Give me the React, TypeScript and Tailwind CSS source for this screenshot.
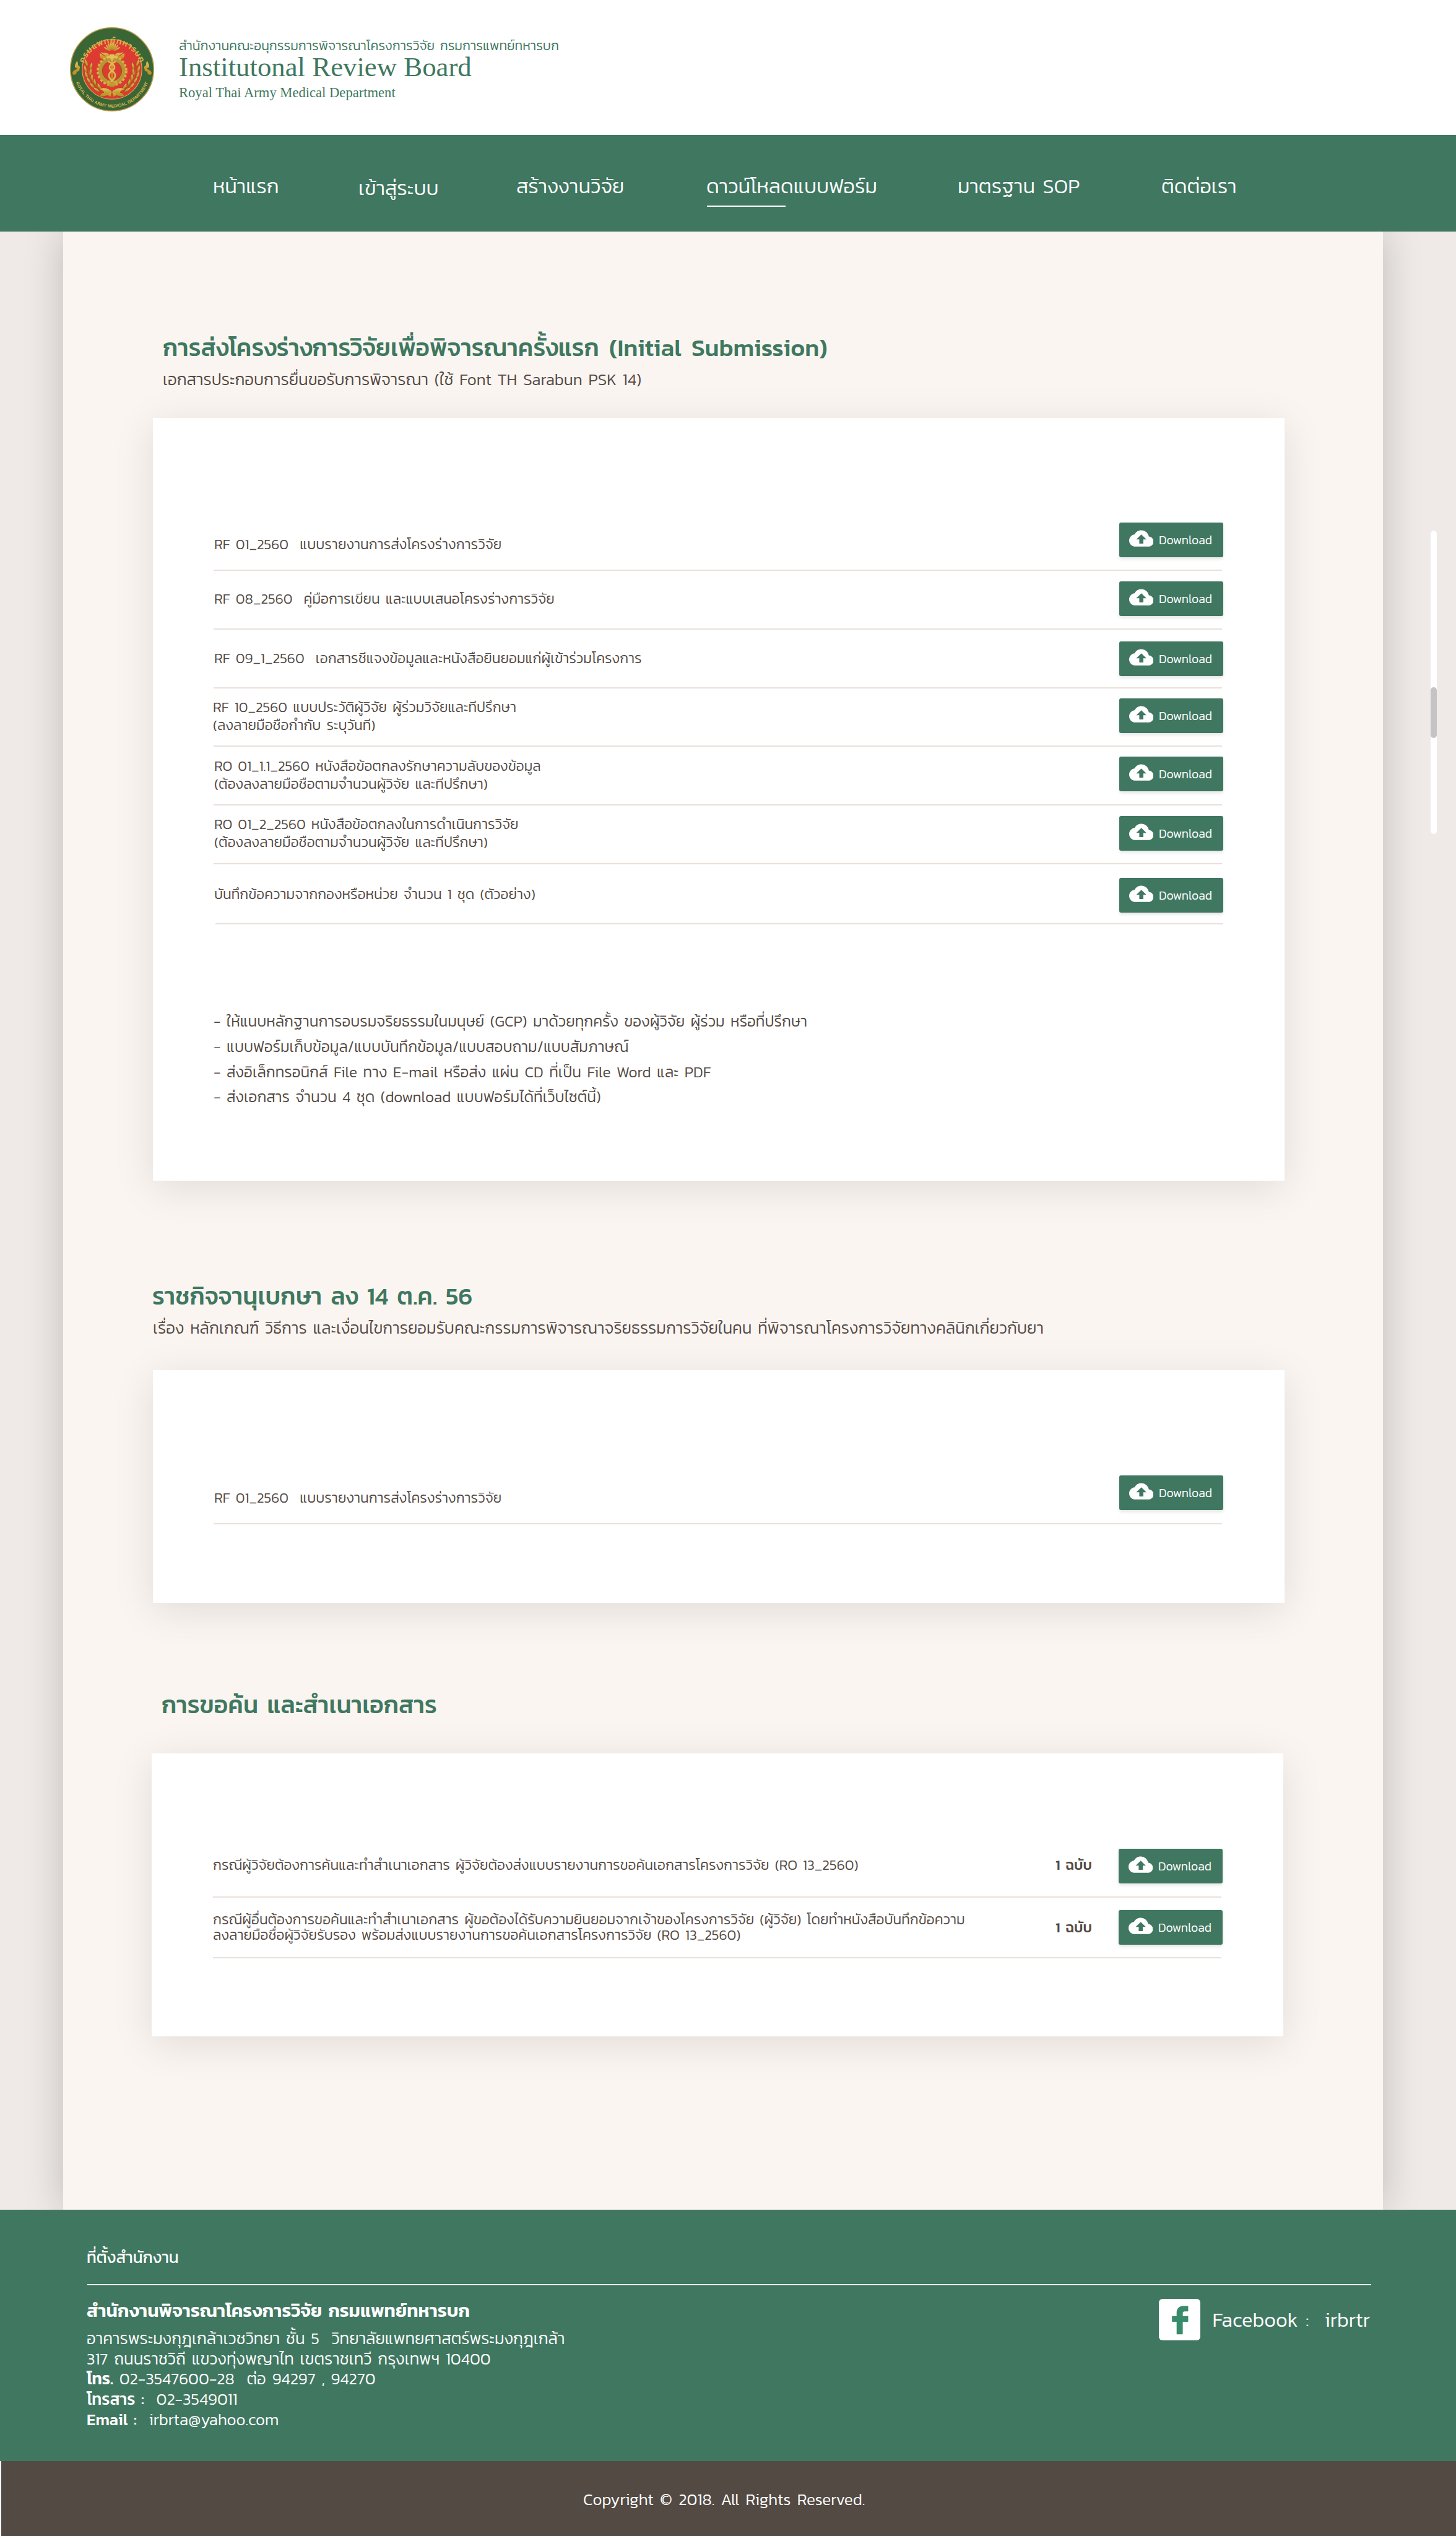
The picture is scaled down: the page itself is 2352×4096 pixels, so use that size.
import type { ReactNode } from "react";

type Row = {
  lines: string[];
  row: string;
  text: string;
  button: string;
  copies?: string;
};

function Seal() {
  const leaves = [
    [33, 72, -18], [31, 84, -14], [33, 96, -20], [38, 107, -30], [45, 117, -42], [54, 125, -55],
    [42, 78, 16], [41, 90, 10], [44, 101, 0], [50, 111, -14], [59, 119, -30],
  ];
  return (
    <svg viewBox="0 0 168 168" className="size-[136px] shrink-0">
      <defs>
        <path id="arcTop" d="M 26.5 75 A 59 59 0 0 1 141.5 75" transform="translate(0 3)" />
        <path id="arcBottom" d="M 8.5 96 A 76.5 76.5 0 0 0 159.5 96" />
        <linearGradient id="gold" x1="0" y1="0" x2="0" y2="1">
          <stop offset="0" stopColor="#e8c860" />
          <stop offset="0.5" stopColor="#c99f35" />
          <stop offset="1" stopColor="#b98a28" />
        </linearGradient>
      </defs>
      <circle cx="84" cy="84" r="83" fill="#3a6636" stroke="#b79a45" strokeWidth="2" />
      <circle cx="84" cy="84" r="59.5" fill="#dd3a31" stroke="#c9b25a" strokeWidth="1.4" />
      <text fill="#d8b44a" fontFamily="Kanit, sans-serif" fontWeight="500" fontSize="17" letterSpacing="1.2">
        <textPath href="#arcTop" startOffset="50%" textAnchor="middle">กรมแพทย์ทหารบก</textPath>
      </text>
      <text fill="#d8b44a" fontFamily="Liberation Sans, sans-serif" fontWeight="700" fontSize="8.6" className="[word-spacing:1px]">
        <textPath href="#arcBottom" startOffset="50%" textAnchor="middle">ROYAL THAI ARMY MEDICAL DEPARTMENT</textPath>
      </text>
      {[0, 1].map((side) => (
        <g key={side} transform={side ? "translate(168 0) scale(-1 1)" : undefined}>
          <path d="M14 67c-2 5-5 8-4 12 1 3 5 4 7 2-4 4-11 5-12 10 0 4 4 5 6 3 3-1 3-4 1-5 3-1 7 0 7-5 2-4 0-8-3-8 0-3 0-6-2-9z" fill="url(#gold)" />
          {leaves.map(([x, y, r]) => (
            <path key={`${x}-${y}`} d="M0 7C-4 2-3-4 0-9C3-4 4 2 0 7z" transform={`translate(${x} ${y}) rotate(${r})`} fill="url(#gold)" stroke="#8f3a1c" strokeWidth="0.6" />
          ))}
          <path d="M37 86C39 106 54 124 80 131" fill="none" stroke="#a5761f" strokeWidth="1.6" />
          <path d="M84 128c-8-8-20-9-27-4 5 0 9 2 11 6-4 1-8 4-9 8 8 1 17-1 25-6z" fill="url(#gold)" stroke="#8f3a1c" strokeWidth="0.6" />
          <path d="M82 62c-6 2-9-1-12-5-2-3-7-3-8-8 4 4 8 1 12 3 3 1 5 4 8 4zM60 52c-2 5 0 9 4 11l8 3 4-5-8-4z" fill="url(#gold)" />
          <path d="M82 138c-3 0-6-1-7-4l7-4z" fill="url(#gold)" />
        </g>
      ))}
      {[-60, -42, -26, -12, 0, 12, 26, 42, 60].map((r) => (
        <path key={r} d="M0-3C-2.6-10-2-15 0-19C2-15 2.6-10 0-3z" transform={`translate(84 49) rotate(${r})`} fill="url(#gold)" />
      ))}
      <circle cx="84" cy="87" r="23.5" fill="none" stroke="#bd9434" strokeWidth="9" />
      <circle cx="84" cy="87" r="28.5" fill="none" stroke="#d6b148" strokeWidth="4.5" strokeDasharray="5 3.2" />
      <circle cx="84" cy="87" r="19.5" fill="none" stroke="#7d5516" strokeWidth="1.2" />
      <path d="M80 54h8l-1.5 12h-5zM82.5 66h3v48h-3z" fill="url(#gold)" />
      <path d="M76 68c12 6 18 12 8 19s-7 14 2 22M92 68c-12 6-18 12-8 19s7 14-2 22" fill="none" stroke="#dcb84f" strokeWidth="3.4" />
      <path d="M73 58h22v4H73z" fill="#e3c25a" />
      <path d="M76 106l8 9 8-9 2 6-6 7h-8l-6-7z" fill="url(#gold)" />
    </svg>
  );
}

function CloudUpload() {
  return (
    <svg viewBox="0 0 24 24" className="size-[39.4px] shrink-0 fill-white">
      <path d="M19.35 10.04C18.67 6.59 15.64 4 12 4 9.11 4 6.6 5.64 5.35 8.04 2.34 8.36 0 10.91 0 14c0 3.31 2.69 6 6 6h13c2.76 0 5-2.24 5-5 0-2.64-2.05-4.78-4.65-4.96zM14 13v4h-4v-4H7l5-5 5 5h-3z" />
    </svg>
  );
}

function DownloadButton({ className }: { className: string }) {
  return (
    <button
      className={`-mr-[2px] flex h-[55.5px] w-[168px] shrink-0 items-start rounded-[3px] bg-[#407761] pl-[16px] pt-[6px] text-[19.6px] font-light leading-[30px] text-white shadow-[0_3px_5px_rgba(0,0,0,0.1)] ${className}`}
    >
      <CloudUpload />
      <span className="ml-[8.5px] mt-[6.5px]">Download</span>
    </button>
  );
}

function FileRow({ item }: { item: Row }) {
  return (
    <div className={`flex items-start justify-between border-b-2 border-[#eae0d9] ${item.row}`}>
      <div className={`whitespace-pre ${item.text}`}>
        {item.lines.map((line) => (
          <div key={line}>{line}</div>
        ))}
      </div>
      <div className="flex items-start">
        {item.copies && <span className={`mr-[43px] whitespace-pre font-medium ${item.copies}`}>1 ฉบับ</span>}
        <DownloadButton className={item.button} />
      </div>
    </div>
  );
}

function Card({ className, children }: { className: string; children: ReactNode }) {
  return (
    <div className={`bg-white text-[22.87px] font-light leading-[29.4px] shadow-[0_12px_62px_rgba(0,0,0,0.1)] ${className}`}>
      <div className="w-[1629px]">{children}</div>
    </div>
  );
}

function Title({ className, children }: { className: string; children: ReactNode }) {
  return <h2 className={`whitespace-pre text-[39.2px] font-medium leading-[56px] text-[#3f7860] ${className}`}>{children}</h2>;
}

function Subtitle({ className, children }: { className: string; children: ReactNode }) {
  return <p className={`whitespace-pre text-[26.13px] font-light leading-[36px] ${className}`}>{children}</p>;
}

const initialFiles: Row[] = [
  { lines: ["RF 01_2560  แบบรายงานการส่งโครงร่างการวิจัย"], row: "h-[247px]", text: "ml-px pt-[190px]", button: "mt-[169px]" },
  { lines: ["RF 08_2560  คู่มือการเขียน และแบบเสนอโครงร่างการวิจัย"], row: "h-[95px]", text: "ml-px pt-[31px]", button: "mt-[17px]" },
  { lines: ["RF 09_1_2560  เอกสารชีแจงข้อมูลและหนังสือยินยอมแก่ผู้เข้าร่วมโครงการ"], row: "h-[95px]", text: "ml-px pt-[32px]", button: "mt-[19px]" },
  { lines: ["RF 10_2560 แบบประวัติผู้วิจัย ผู้ร่วมวิจัยและทีปรึกษา", "(ลงลายมือชือกำกับ ระบุวันที)"], row: "h-[94px]", text: "-ml-px pt-[16px]", button: "mt-[16px]" },
  { lines: ["RO 01_1.1_2560 หนังสือข้อตกลงรักษาความลับของข้อมูล", "(ต้องลงลายมือชือตามจำนวนผู้วิจัย และทีปรึกษา)"], row: "h-[95px]", text: "ml-px pt-[17px]", button: "mt-[16px]" },
  { lines: ["RO 01_2_2560 หนังสือข้อตกลงในการดำเนินการวิจัย", "(ต้องลงลายมือชือตามจำนวนผู้วิจัย และทีปรึกษา)"], row: "h-[95px]", text: "ml-px pt-[16px]", button: "mt-[17px]" },
  { lines: ["บันทึกข้อความจากกองหรือหน่วย จำนวน 1 ชุด (ตัวอย่าง)"], row: "ml-[3px] -mr-[2px] h-[97px]", text: "-ml-[2px] pt-[34px]", button: "mt-[22px] mr-0!" },
];

const gazetteFiles: Row[] = [
  { lines: ["RF 01_2560  แบบรายงานการส่งโครงร่างการวิจัย"], row: "h-[249px]", text: "ml-px pt-[192px]", button: "mt-[170px]" },
];

const copyFiles: Row[] = [
  {
    lines: ["กรณีผู้วิจัยต้องการค้นและทำสำเนาเอกสาร ผู้วิจัยต้องส่งแบบรายงานการขอค้นเอกสารโครงการวิจัย (RO 13_2560)"],
    row: "h-[233px]", text: "pt-[166px]", button: "mt-[154px]", copies: "pt-[166px]",
  },
  {
    lines: [
      "กรณีผู้อื่นต้องการขอค้นและทำสำเนาเอกสาร ผู้ขอต้องได้รับความยินยอมจากเจ้าของโครงการวิจัย (ผู้วิจัย) โดยทำหนังสือบันทึกข้อความ",
      "ลงลายมือชื่อผู้วิจัยรับรอง พร้อมส่งแบบรายงานการขอค้นเอกสารโครงการวิจัย (RO 13_2560)",
    ],
    row: "h-[98px]", text: "pt-[23px] leading-[24.5px]", button: "mt-[20px]", copies: "pt-[34px]",
  },
];

const notes = [
  "- ให้แนบหลักฐานการอบรมจริยธรรมในมนุษย์ (GCP) มาด้วยทุกครั้ง ของผู้วิจัย ผู้ร่วม หรือที่ปรึกษา",
  "- แบบฟอร์มเก็บข้อมูล/แบบบันทึกข้อมูล/แบบสอบถาม/แบบสัมภาษณ์",
  "- ส่งอิเล็กทรอนิกส์ File ทาง E-mail หรือส่ง แผ่น CD ที่เป็น File Word และ PDF",
  "- ส่งเอกสาร จำนวน 4 ชุด (download แบบฟอร์มได้ที่เว็บไซต์นี้)",
];

const nav = [
  { label: "หน้าแรก", box: "w-[235px]" },
  { label: "เข้าสู่ระบบ", box: "w-[255px] mt-[3px]" },
  { label: "สร้างงานวิจัย", box: "w-[307px]" },
  { label: "ดาวน์โหลดแบบฟอร์ม", box: "w-[406px]", active: true },
  { label: "มาตรฐาน SOP", box: "w-[329px]" },
  { label: "ติดต่อเรา", box: "" },
];

export default function App() {
  return (
    <div className="flex h-[4096px] w-[2352px] flex-col overflow-hidden bg-white font-['Kanit','Noto_Sans_Thai',sans-serif] text-[#534a44] [word-spacing:3.8px]">
      <header className="flex h-[218px] shrink-0 gap-[40px] pl-[113px] pt-[44px] text-[#3f7860]">
        <Seal />
        <div className="whitespace-pre pt-[18px]">
          <p className="text-[21.23px] font-light leading-[24px]">สำนักงานคณะอนุกรรมการพิจารณาโครงการวิจัย กรมการแพทย์ทหารบก</p>
          <h1 className="font-['Liberation_Serif',serif] text-[44.8px] leading-[44px] [word-spacing:0px]">Institutonal Review Board</h1>
          <p className="mt-[6px] font-['Liberation_Serif',serif] text-[22.6px] leading-[28px] [word-spacing:0px]">Royal Thai Army Medical Department</p>
        </div>
      </header>

      <nav className="z-10 flex h-[156px] shrink-0 bg-[#407761] pl-[344px] pt-[59px] text-[32.67px] font-light leading-[48px] text-white [word-spacing:5px]">
        {nav.map((item) => (
          <a key={item.label} className={`shrink-0 whitespace-pre ${item.box}`}>
            {item.label}
            {item.active && <span className="ml-px mt-[7px] block h-[2px] w-[127px] bg-white" />}
          </a>
        ))}
      </nav>

      <main className="flex h-[3195px] shrink-0 items-start overflow-hidden bg-[#efeae7]">
        <div className="ml-[102px] h-full w-[2132px] shrink-0 bg-[#fbf5f2] shadow-[0_0_60px_rgba(0,0,0,0.2)]">
          <section className="pt-[159px]">
            <Title className="ml-[161px] [word-spacing:7.5px]">การส่งโครงร่างการวิจัยเพื่อพิจารณาครั้งแรก (Initial Submission)</Title>
            <Subtitle className="ml-[161px] mt-[6px]">เอกสารประกอบการยื่นขอรับการพิจารณา (ใช้ Font TH Sarabun PSK 14)</Subtitle>
            <Card className="ml-[145px] mt-[44px] h-[1232px] w-[1828px] pl-[98px]">
              {initialFiles.map((item) => (
                <FileRow key={item.lines[0]} item={item} />
              ))}
              <ul className="mt-[137px] whitespace-pre text-[24.5px] leading-[40.83px]">
                {notes.map((note) => (
                  <li key={note}>{note}</li>
                ))}
              </ul>
            </Card>
          </section>

          <section className="pt-[158px]">
            <Title className="ml-[144px] [word-spacing:5.5px]">ราชกิจจานุเบกษา ลง 14 ต.ค. 56</Title>
            <Subtitle className="ml-[145px] mt-[6px]">
              เรื่อง หลักเกณฑ์ วิธีการ และเงื่อนไขการยอมรับคณะกรรมการพิจารณาจริยธรรมการวิจัยในคน ที่พิจารณาโครงการวิจัยทางคลินิกเกี่ยวกับยา
            </Subtitle>
            <Card className="ml-[145px] mt-[50px] h-[376px] w-[1828px] pl-[98px]">
              {gazetteFiles.map((item) => (
                <FileRow key={item.lines[0]} item={item} />
              ))}
            </Card>
          </section>

          <section className="pt-[136px]">
            <Title className="ml-[159px] [word-spacing:5.5px]">การขอค้น และสำเนาเอกสาร</Title>
            <Card className="ml-[143px] mt-[51px] h-[457px] w-[1828px] pl-[99px]">
              {copyFiles.map((item) => (
                <FileRow key={item.lines[0]} item={item} />
              ))}
            </Card>
          </section>
        </div>
        <div className="ml-[77px] mt-[483px] h-[490px] w-[10px] shrink-0 rounded-full bg-white pt-[253px]">
          <div className="h-[82px] rounded-full bg-[#c4c4c4]" />
        </div>
      </main>

      <footer className="h-[406px] shrink-0 whitespace-pre bg-[#407761] pl-[141px] pt-[59px] text-[26.13px] font-light text-white">
        <p className="-ml-px font-normal leading-[36px]">ที่ตั้งสำนักงาน</p>
        <div className="mt-[25px] h-[2px] w-[2074px] bg-white" />
        <div className="-ml-px flex w-[2075px] justify-between pt-[21px]">
          <div>
            <h3 className="text-[29.4px] font-semibold leading-[40px]">สำนักงานพิจารณาโครงการวิจัย กรมแพทย์ทหารบก</h3>
            <div className="mt-[9px] leading-[32.67px]">
              <p>อาคารพระมงกุฎเกล้าเวชวิทยา ชั้น 5  วิทยาลัยแพทยศาสตร์พระมงกุฎเกล้า</p>
              <p>317 ถนนราชวิถี แขวงทุ่งพญาไท เขตราชเทวี กรุงเทพฯ 10400</p>
              <p><span className="font-semibold">โทร.</span> 02-3547600-28  ต่อ 94297 , 94270</p>
              <p><span className="font-medium">โทรสาร :</span>  02-3549011</p>
              <p><span className="font-medium">Email :</span>  irbrta@yahoo.com</p>
            </div>
          </div>
          <div className="flex items-start text-[32.67px] leading-[48px]">
            <svg viewBox="0 0 67 67" className="mt-[0.5px] size-[67px] shrink-0">
              <rect width="67" height="67" rx="6" fill="#fff" />
              <path fill="#388b6b" d="M28.7 56.5V37h-6.8a.7.7 0 0 1-.7-.7v-7.8a.7.7 0 0 1 .7-.7h6.8V22c0-6.500 4.300-10.600 10.300-10.600h7.700a.7.7 0 0 1 .7.7v7.400a.7.7 0 0 1-.7.7h-5c-2.100 0-3.100 1-3.100 3v4.600h8.100a.7.7 0 0 1 .7.7v7.800a.7.7 0 0 1-.7.7h-8.100v19.500a.7.7 0 0 1-.7.7h-8.500a.7.7 0 0 1-.7-.7z" />
            </svg>
            <span className="ml-[19px] mr-[2px] mt-[11px] [word-spacing:5px]">Facebook :  irbrtr</span>
          </div>
        </div>
      </footer>

      <div className="h-[121px] shrink-0 whitespace-pre border-l-2 border-white bg-[#534a44] pl-[940px] pt-[44px] text-[26.13px] font-light leading-[36px] text-white [word-spacing:4.3px]">
        Copyright © 2018. All Rights Reserved.
      </div>
    </div>
  );
}
